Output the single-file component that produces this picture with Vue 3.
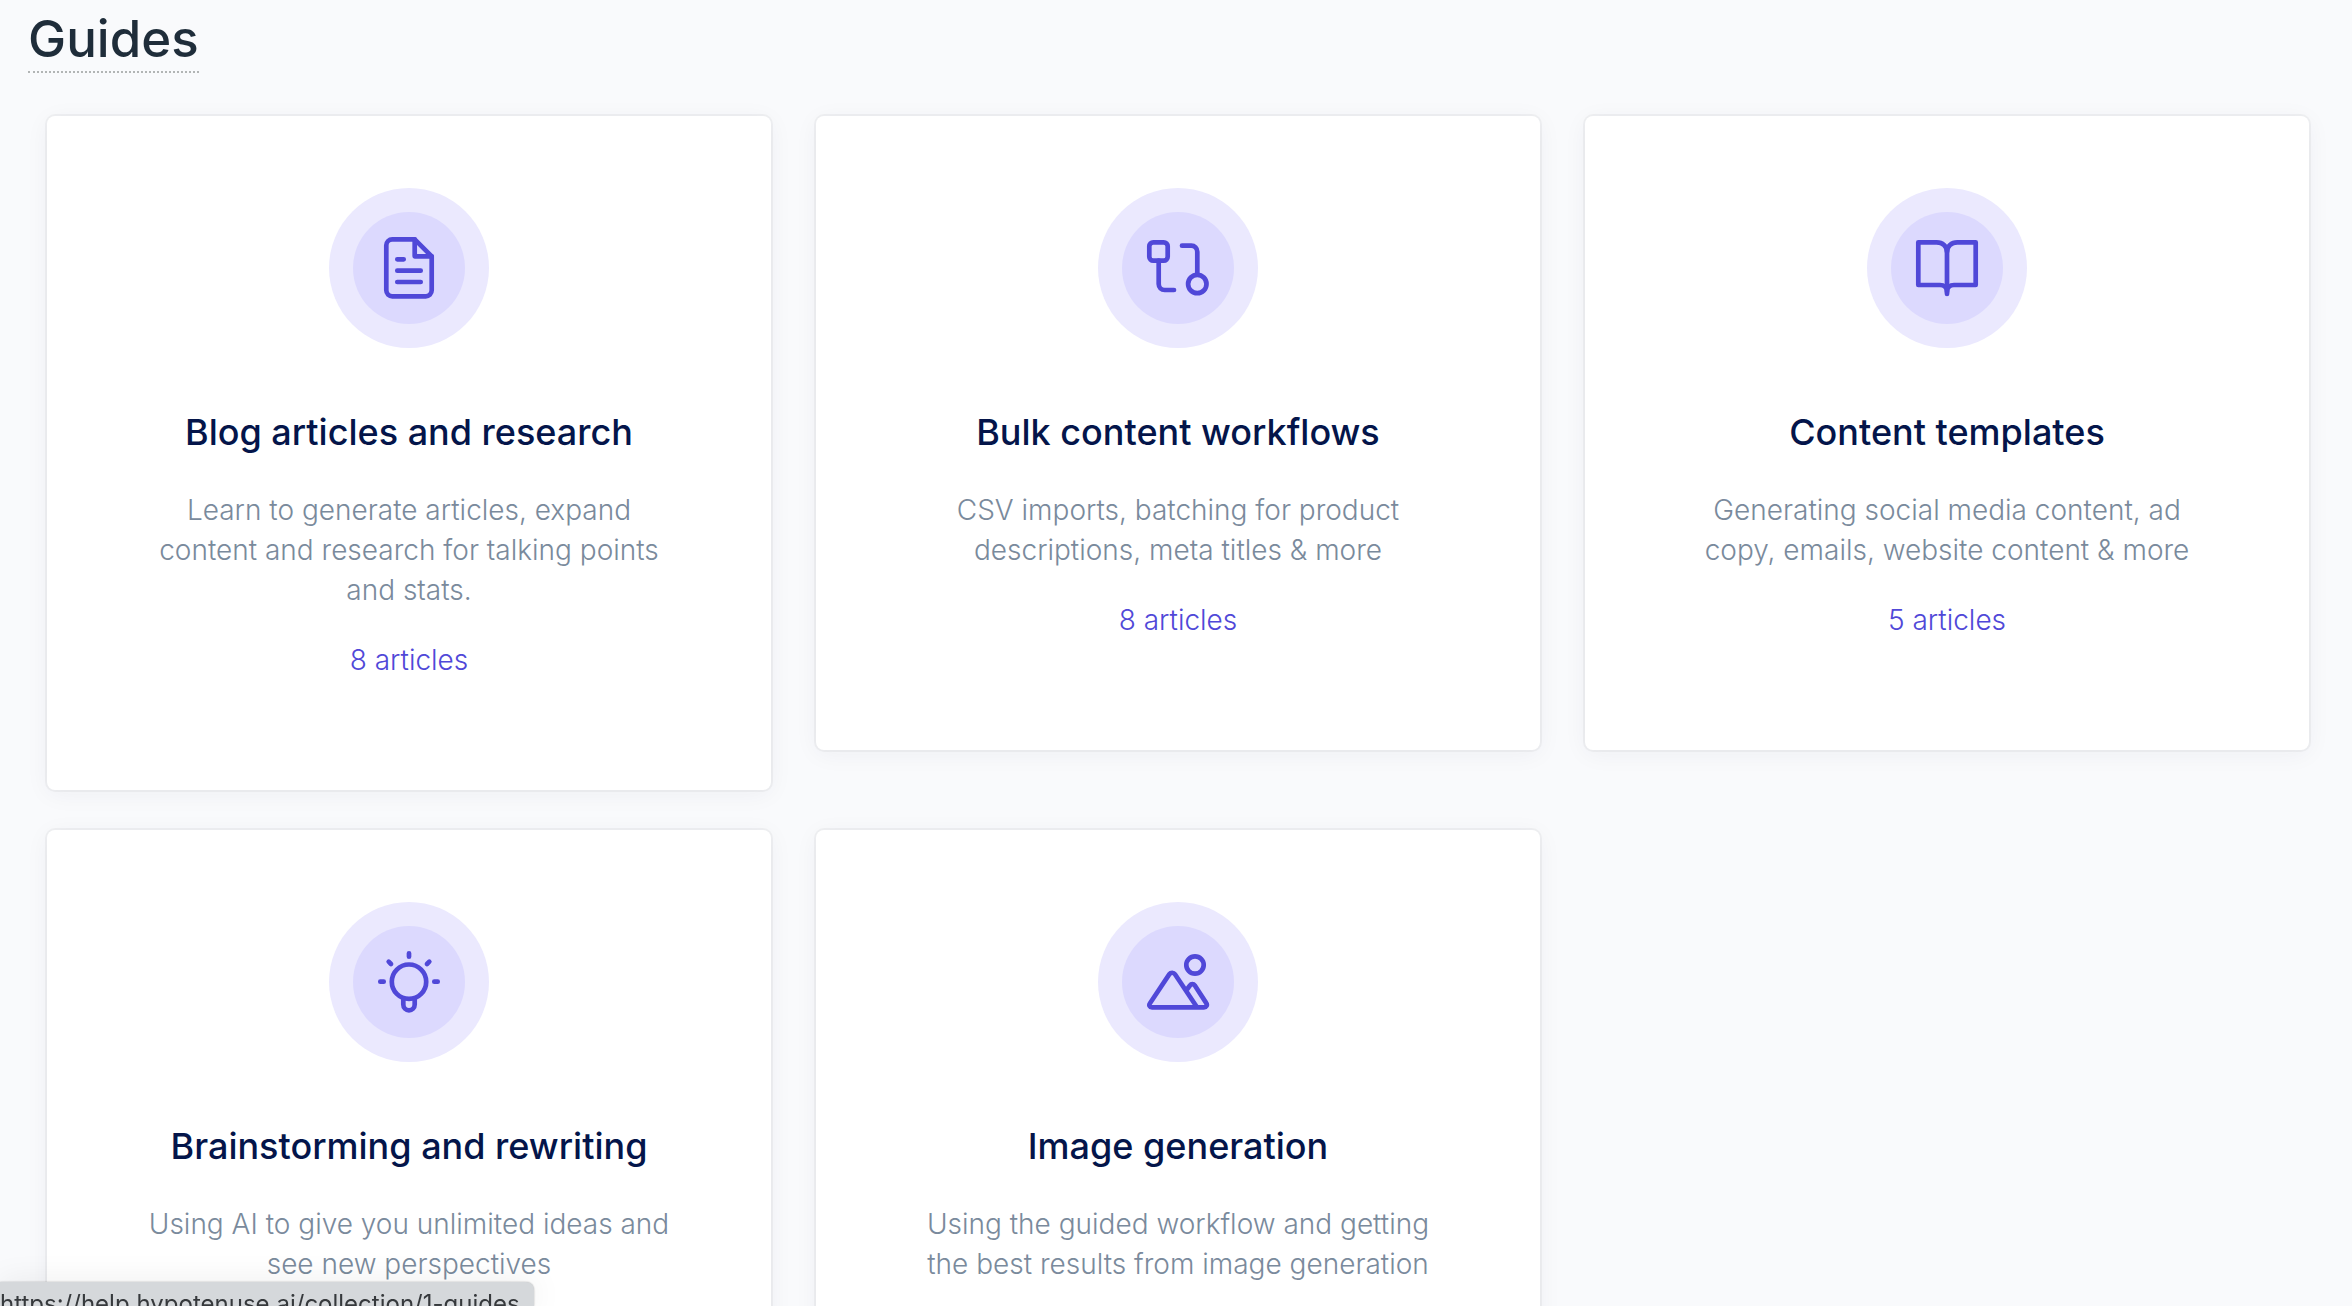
<script setup>
const guides = [
  {
    icon: 'document',
    title: 'Blog articles and research',
    text: 'Learn to generate articles, expand content and research for talking points and stats.',
    count: 8,
  },
  {
    icon: 'workflow',
    title: 'Bulk content workflows',
    text: 'CSV imports, batching for product descriptions, meta titles & more',
    count: 8,
  },
  {
    icon: 'book',
    title: 'Content templates',
    text: 'Generating social media content, ad copy, emails, website content & more',
    count: 5,
  },
  {
    icon: 'bulb',
    title: 'Brainstorming and rewriting',
    text: 'Using AI to give you unlimited ideas and see new perspectives',
  },
  {
    icon: 'image',
    title: 'Image generation',
    text: 'Using the guided workflow and getting the best results from image generation',
  },
]

const icons = {
  document: [
    'M37.7 3.3H15.3a6 6 0 0 0-6 6v45a6 6 0 0 0 6 6h33.4a6 6 0 0 0 6-6V20.3z',
    'M37.7 3.3v17h17',
    'M20.3 23.3h6.4M20.3 34.7h23.4M20.3 46h23.4',
  ],
  workflow: [
    'M7.3 6.3h10.4a4 4 0 0 1 4 4v10.4a4 4 0 0 1-4 4H7.3a4 4 0 0 1-4-4V10.3a4 4 0 0 1 4-4z',
    'M12.7 24.7V48a6 6 0 0 0 6 6H28',
    'M36 9.7h9.3a6 6 0 0 1 6 6v23',
    'M42.1 48a9.2 9.2 0 1 0 18.4 0a9.2 9.2 0 1 0-18.4 0z',
  ],
  book: [
    'M32 16C32 10 27.5 6.3 21.7 6.3H3.3V49H25c4 0 7 2.5 7 7c0-4.5 3-7 7-7h21.7V6.3H42.3C36.5 6.3 32 10 32 16z',
    'M32 13v45',
  ],
  bulb: [
    'M14.8 31.7a17.2 17.2 0 1 0 34.4 0a17.2 17.2 0 1 0-34.4 0z',
    'M26.3 49v5.6a5.7 5.7 0 0 0 11.4 0V49',
    'M32 3.3v3.4M3.3 31.7h3.4M57.3 31.7h3.4M11.7 11.7L14 14M52.3 11.7L50 14',
  ],
  image: [
    'M40.3 15a8.7 8.7 0 1 0 17.4 0a8.7 8.7 0 1 0-17.4 0z',
    'M51 57.3L29 24.2a3.4 3.4 0 0 0-5.6 0L4 53.2C2.6 55.2 3.6 57.3 6 57.3h52c2.4 0 3.6-2.3 2.3-4.2L48.7 35.3c-1.2-1.7-3.5-1.7-4.7 0L41.3 39',
  ],
}
</script>

<template>
  <main class="page">
    <h1 class="heading"><a href="#guides">Guides</a></h1>
    <section id="guides" class="grid">
      <article v-for="guide in guides" :key="guide.title" class="card">
        <div class="badge">
          <div class="badge-inner">
            <svg class="icon" viewBox="0 0 64 64" aria-hidden="true">
              <path v-for="d in icons[guide.icon]" :key="d" :d="d" />
            </svg>
          </div>
        </div>
        <h2 class="title">{{ guide.title }}</h2>
        <p class="text">{{ guide.text }}</p>
        <a v-if="guide.count" class="count" href="#">{{ guide.count }} articles</a>
      </article>
    </section>
    <div class="status">https://help.hypotenuse.ai/collection/1-guides</div>
  </main>
</template>

<style>
html,
body {
  margin: 0;
  height: 100%;
  overflow: hidden;
  background: #f9fafc;
}
</style>

<style scoped>
.page {
  font-family: Inter, "Liberation Sans", sans-serif;
}

.heading {
  margin: 0;
  padding: 7px 28px 43px;
  font-size: 51px;
  line-height: 64px;
  font-weight: 500;
  display: flex;
}

.heading a {
  color: #1f2d3a;
  text-decoration: none;
  border-bottom: 2px dotted #b2b5b5;
}

.grid {
  display: grid;
  grid-template-columns: repeat(3, 1fr);
  align-items: start;
  gap: 40px 45px;
  padding: 0 43px 40px 47px;
}

.card {
  display: flex;
  flex-direction: column;
  align-items: center;
  padding: 72px 100px 110px;
  border-radius: 8px;
  background: #fff;
  box-shadow: 0 0 0 2px rgba(0, 0, 0, 0.04), 0 4px 24px rgba(30, 45, 70, 0.05);
  text-align: center;
}

.badge {
  display: flex;
  align-items: center;
  justify-content: center;
  width: 160px;
  height: 160px;
  border-radius: 50%;
  background: #ebe9fe;
}

.badge-inner {
  display: flex;
  align-items: center;
  justify-content: center;
  width: 112px;
  height: 112px;
  border-radius: 50%;
  background: #dcd9fe;
}

.icon {
  width: 64px;
  height: 64px;
  fill: none;
  stroke: #5048d8;
  stroke-width: 4.7;
  stroke-linecap: round;
  stroke-linejoin: round;
}

.title {
  margin: 60px 0 34px;
  font-size: 36px;
  line-height: 48px;
  font-weight: 500;
  color: #04154a;
}

.text {
  margin: 0 0 30px;
  font-size: 28px;
  line-height: 40px;
  font-weight: 350;
  color: #7a8a9c;
}

.count {
  font-size: 28px;
  line-height: 40px;
  font-weight: 350;
  color: #5048d8;
  text-decoration: none;
}

.status {
  position: fixed;
  left: 0;
  bottom: 0;
  box-sizing: border-box;
  height: 24px;
  padding: 4px 14px 0 0;
  overflow: hidden;
  border-top-right-radius: 8px;
  background: #d5d8db;
  box-shadow: 0 0 2px rgba(0, 0, 0, 0.3), 0 0 32px rgba(0, 0, 0, 0.08);
  color: #36393c;
  font-size: 24px;
  line-height: 36px;
  white-space: nowrap;
}
</style>
